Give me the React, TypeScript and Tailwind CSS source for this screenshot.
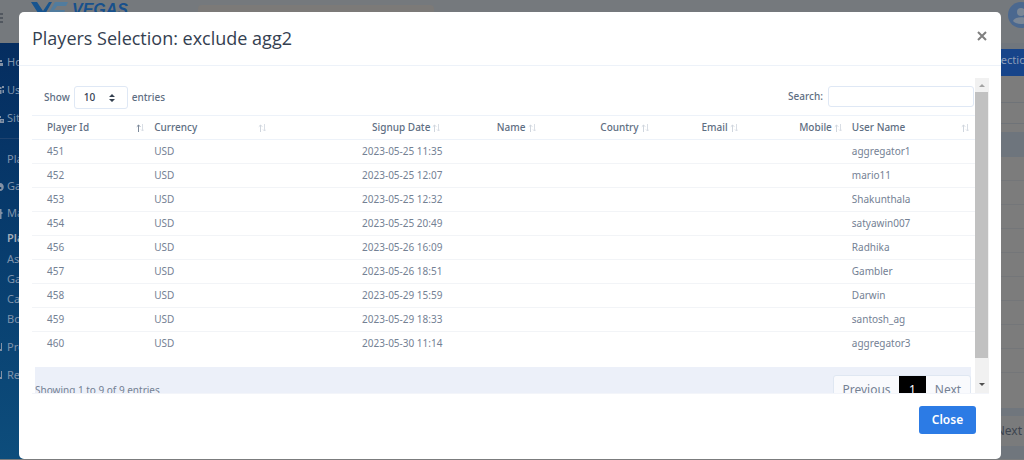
import { useState } from "react";

interface Player {
  id: number;
  currency: string;
  signup: string;
  userName: string;
}

interface Column {
  label: string;
  align: "left" | "right";
  sorted?: boolean;
}

const players: Player[] = [
  { id: 451, currency: "USD", signup: "2023-05-25 11:35", userName: "aggregator1" },
  { id: 452, currency: "USD", signup: "2023-05-25 12:07", userName: "mario11" },
  { id: 453, currency: "USD", signup: "2023-05-25 12:32", userName: "Shakunthala" },
  { id: 454, currency: "USD", signup: "2023-05-25 20:49", userName: "satyawin007" },
  { id: 456, currency: "USD", signup: "2023-05-26 16:09", userName: "Radhika" },
  { id: 457, currency: "USD", signup: "2023-05-26 18:51", userName: "Gambler" },
  { id: 458, currency: "USD", signup: "2023-05-29 15:59", userName: "Darwin" },
  { id: 459, currency: "USD", signup: "2023-05-29 18:33", userName: "santosh_ag" },
  { id: 460, currency: "USD", signup: "2023-05-30 11:14", userName: "aggregator3" },
];

const columns: Column[] = [
  { label: "Player Id", align: "left", sorted: true },
  { label: "Currency", align: "left" },
  { label: "Signup Date", align: "right" },
  { label: "Name", align: "right" },
  { label: "Country", align: "right" },
  { label: "Email", align: "right" },
  { label: "Mobile", align: "right" },
  { label: "User Name", align: "left" },
];

// Right-hand part of each menu icon, the rest is scrolled off the edge
const menuIcons: Record<string, string> = {
  Home: "M0 3H2V5H0ZM0 6H3V9H0Z",
  Users: "M0 2H1.5V4H0ZM2 1H4V3H2ZM0 5H1.5V9H0ZM2.5 5H4V8H2.5Z",
  Sites: "M0 3H1V5H0ZM0 6H4V10H0ZM1.5 7V8.5H2.5V7Z",
  Games: "M0 1C5 1 5 9 0 9V7C2 7 2 5 0 5Z",
  Manage: "M0 0H1.5V3H2.5V5H1.5V10H0Z",
  Profile: "M0 7H1V1H2V9H0Z",
  Reports: "M0 7H1V1H2V9H0Z",
};

const MenuIcon = ({ name }: { name: string }) => (
  <svg width="4" height="10" viewBox="0 0 4 10" fill="#8391a5" fillRule="evenodd" className="shrink-0">
    <path d={menuIcons[name]} />
  </svg>
);

const SortIcon = ({ sorted }: { sorted?: boolean }) => (
  <svg width="8" height="8" viewBox="0 0 8 8" fill="none" className="shrink-0">
    <path d="M2.5 8V1M0.8 2.7L2.5 1L4.2 2.7" stroke={sorted ? "#7c899a" : "#d0d6de"} />
    <path d="M6.5 0V7M5 5.5L6.5 7L8 5.5" stroke="#d9dee5" />
  </svg>
);

const Sidebar = () => (
  <nav className="w-40 shrink-0 bg-linear-to-b from-[#052d60] to-[#0d4d7c] pt-[5px] text-[11px] text-[#7f93ac]">
    <ul className="border-b border-[#1f436f] pb-[6px]">
      {["Home", "Users", "Sites"].map((item) => (
        <li key={item} className="flex h-[28px] items-center gap-[3px]">
          <MenuIcon name={item} />
          <a href="#">{item}</a>
        </li>
      ))}
    </ul>
    <ul className="pt-[6px]">
      <li className="flex h-[28px] items-center pl-[7px]">Players</li>
      {["Games", "Manage"].map((item) => (
        <li key={item} className="flex h-[27px] items-center gap-[3px]">
          <MenuIcon name={item} />
          <a href="#">{item}</a>
        </li>
      ))}
      <li className="flex h-[22px] items-center pl-[7px] font-semibold text-[#a3adb9]">
        <a href="#">Players</a>
      </li>
      {["Assign", "Games", "Cash", "Bonus"].map((item) => (
        <li key={item} className="flex h-[20px] items-center pl-[7px]">
          <a href="#">{item}</a>
        </li>
      ))}
    </ul>
    <ul className="pt-[4px]">
      {["Profile", "Reports"].map((item) => (
        <li key={item} className="flex h-[28px] items-center gap-[3px]">
          <MenuIcon name={item} />
          <a href="#">{item}</a>
        </li>
      ))}
    </ul>
  </nav>
);

const Backdrop = () => (
  <div className="flex min-h-screen flex-col bg-[#7b7c7d]">
    <header className="flex h-[43px] shrink-0 items-start bg-[#75797d]">
      <svg width="4" height="14" viewBox="0 0 4 14" className="mt-[11px]" stroke="#454c56" strokeWidth="1.5">
        <path d="M0 3H3M0 7H3M0 11H3" />
      </svg>
      <div className="ml-[27px] flex items-start gap-[3px]">
        <svg width="38" height="20" viewBox="0 0 38 20" className="mt-[2px]">
          <path d="M0 0H6L12 9L18 0H21L13 14H9Z" fill="#17548f" />
          <path d="M24 0H37L35 4H26L23 8H34L32 14H16Z" fill="#517c9e" />
        </svg>
        <span className="font-['Liberation_Sans'] text-[16px] leading-[20px] font-bold text-[#17508c] italic">VEGAS</span>
      </div>
      <div className="mt-[5px] ml-[70px] h-[30px] w-[236px] rounded-sm bg-[#7c7a78]" />
      <svg width="16" height="26" viewBox="0 0 16 26" className="mt-[2px] ml-auto">
        <circle cx="13" cy="13" r="13" fill="#4b688f" />
        <circle cx="13" cy="10" r="4" fill="#7b8796" />
        <path d="M5 19C7 14 19 14 21 19C17 23 9 23 5 19Z" fill="#7b8796" />
      </svg>
    </header>
    <div className="mb-px flex flex-1">
      <Sidebar />
      <main className="flex-1 bg-[#70767d] pt-[6px] text-right">
        <div className="flex h-[27px] items-start justify-end overflow-hidden bg-[#16448a] pt-[3px] text-[11px] text-[#8b9db8]">
          <span className="w-[26px] text-left">lection</span>
        </div>
        <div className="h-[27px] border-b border-[#6f7378] bg-[#7c7c7c]" />
        <div className="h-[21px] border-b border-[#6f7378] bg-[#7c7c7c]" />
        <div className="h-[8px] bg-[#7c7c7c]" />
        <div className="h-[25px] bg-[#6e757d]" />
        {players.map((p) => (
          <div key={p.id} className="h-[24px] border-b border-[#747679] bg-[#7c7c7c]" />
        ))}
        <div className="h-[35px] bg-[#7c7c7c]" />
        <div className="mt-[8px] h-[30px] bg-[#7a7b7c] pr-[2px] text-[12px] leading-[30px] text-[#3d4550]">Next</div>
      </main>
    </div>
  </div>
);

const PlayersTable = () => (
  <table className="w-full table-fixed border-collapse text-[10px] text-[#748194]">
    <colgroup>
      <col className="w-[118px]" />
      <col className="w-[122px]" />
      <col className="w-[174px]" />
      <col className="w-[95px]" />
      <col className="w-[113px]" />
      <col className="w-[89px]" />
      <col className="w-[104px]" />
      <col className="w-[127px]" />
    </colgroup>
    <thead>
      <tr className="h-[24px] border-y border-[#edf2f9] text-[#5e6e82]">
        {columns.map((col) => (
          <th key={col.label} className="p-0 pr-[6px] pl-1 font-medium first:pl-[15px]">
            <div className={col.align === "left" ? "flex items-center justify-between" : "flex items-center justify-end gap-[2px]"}>
              {col.label}
              <SortIcon sorted={col.sorted} />
            </div>
          </th>
        ))}
      </tr>
    </thead>
    <tbody>
      {players.map((player) => (
        <tr key={player.id} className="h-[24px] border-b border-[#f2f4f7] last:border-b-0">
          <td className="p-0 pl-[15px]">{player.id}</td>
          <td className="p-0 pl-1">{player.currency}</td>
          <td className="p-0 pr-1 text-right">{player.signup}</td>
          <td />
          <td />
          <td />
          <td />
          <td className="p-0 pl-1">{player.userName}</td>
        </tr>
      ))}
    </tbody>
  </table>
);

const App = () => {
  const [search, setSearch] = useState("");

  return (
    <div className="relative min-h-screen overflow-hidden font-['Noto_Sans',sans-serif]">
      <Backdrop />

      <div
        role="dialog"
        aria-labelledby="modal-title"
        className="absolute inset-x-0 top-3 mr-[23px] ml-[19px] rounded-[5px] bg-white"
      >
        <div className="flex h-[54px] items-center justify-between border-b border-[#edf2f9] pr-[13px] pl-[13px]">
          <h2 id="modal-title" className="font-['Open_Sans',sans-serif] text-[18px] font-medium text-[#344050]">
            Players Selection: exclude agg2
          </h2>
          <button type="button" aria-label="Close dialog" className="mb-[6px] flex size-3 items-center justify-center">
            <svg width="10" height="10" viewBox="0 0 10 10" stroke="#7f7f7f" strokeWidth="2">
              <path d="M1 1L9 9M9 1L1 9" />
            </svg>
          </button>
        </div>

        <div className="mt-3 mr-3 ml-[13px] flex h-[316px] overflow-hidden border-b border-[#f3f5fa]">
          <div className="min-w-0 flex-1">
            <div className="flex h-[37px] items-start justify-between pt-2 pr-px pl-3 text-[10px] font-medium text-[#5e6e82]">
              <label className="flex items-center gap-1">
                Show
                <span className="relative">
                  <select className="h-[23px] w-[54px] appearance-none rounded-[3px] border border-[#dfe8f5] bg-white pl-[9px] text-[10px] text-[#344050]">
                    <option>10</option>
                  </select>
                  <svg width="6" height="8" viewBox="0 0 6 8" fill="#344050" className="pointer-events-none absolute top-[8px] right-[13px]">
                    <path d="M0 3L3 0L6 3ZM0 5H6L3 8Z" />
                  </svg>
                </span>
                entries
              </label>
              <label className="flex items-center gap-[5px]">
                Search:
                <input
                  type="search"
                  value={search}
                  onChange={(e) => setSearch(e.target.value)}
                  className="h-[21px] w-[146px] rounded-[3px] border border-[#dfe8f5] bg-white px-2"
                />
              </label>
            </div>

            <PlayersTable />

            <div className="mr-1 ml-[3px] mt-[11px] flex h-[50px] items-start justify-between bg-[#ecf0f9] pt-2 text-[#748194]">
              <p className="text-[10px] leading-[30px]">Showing 1 to 9 of 9 entries</p>
              <div className="flex h-[30px] rounded-[3px] border border-[#dfe7f2] bg-[#f9fafd] text-[12px]">
                <button type="button" className="w-[65px]">Previous</button>
                <button type="button" className="w-[27px] bg-black text-white">1</button>
                <button type="button" className="w-[44px]">Next</button>
              </div>
            </div>
          </div>

          {/* Scrollbar */}
          <div className="flex w-[14px] flex-col bg-[#f1f1f1]">
            <svg width="14" height="14" viewBox="0 0 14 14" fill="#a3a3a3">
              <path d="M4 9L7 6L10 9Z" />
            </svg>
            <div className="mr-px flex-1 bg-[#c1c1c1]" />
            <div className="h-[20px]" />
            <svg width="14" height="15" viewBox="0 0 14 15" fill="#505050">
              <path d="M4 5H10L7 8Z" />
            </svg>
          </div>
        </div>

        <div className="flex justify-end pt-3 pr-[25px] pb-[25px]">
          <button type="button" className="h-[28px] w-[57px] rounded-[3px] bg-[#2c7be5] text-[12px] font-semibold text-white">
            Close
          </button>
        </div>
      </div>
    </div>
  );
};

export default App;
